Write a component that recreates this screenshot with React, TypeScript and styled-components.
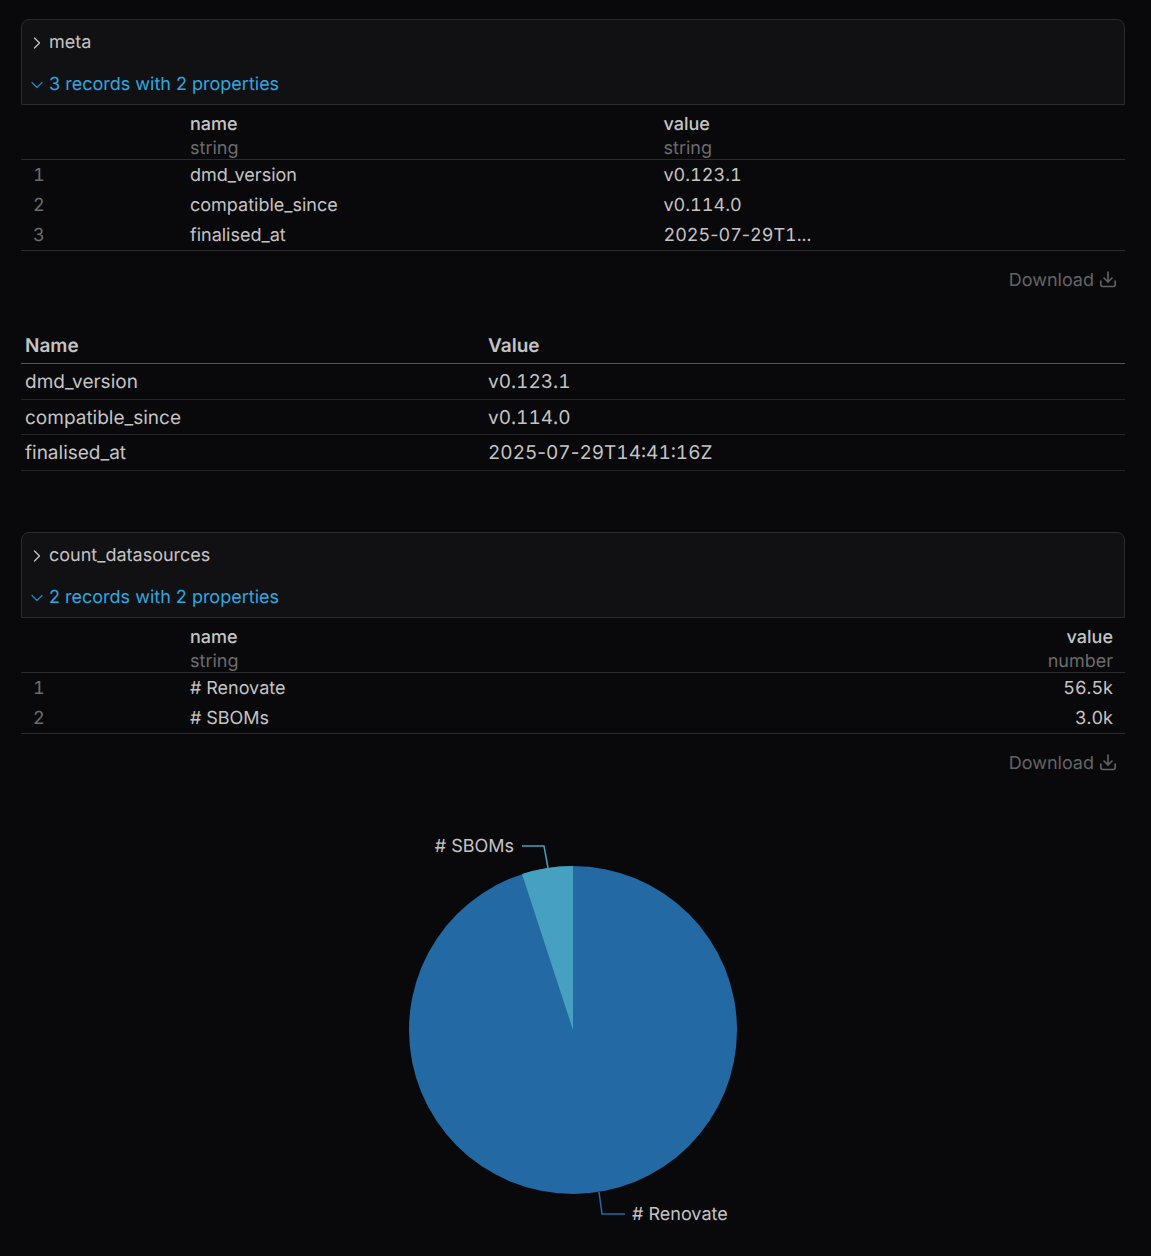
import { createGlobalStyle, styled } from 'styled-components';
import { ChevronDown, ChevronRight } from 'lucide-react';

const GlobalStyle = createGlobalStyle`
  html, body {
    margin: 0;
    padding: 0;
    background: #09090b;
  }
  body {
    font-family: Inter, "Liberation Sans", sans-serif;
    color: #c4c4c5;
    font-size: 18px;
    text-rendering: geometricPrecision;
  }
`;

const Page = styled.div`
  width: 1151px;
  height: 1256px;
  box-sizing: border-box;
  padding: 19px 26px 0 21px;
  overflow: hidden;
`;

const Panel = styled.div`
  height: 86px;
  box-sizing: border-box;
  background: #111113;
  border: 1px solid #2a2b2e;
  border-radius: 8px 8px 0 0;
  display: flex;
  flex-direction: column;
  padding: 1px 0 0 5px;
`;

const PanelRow = styled.div<{ $active?: boolean }>`
  height: 42px;
  flex: none;
  display: flex;
  align-items: center;
  gap: 2px;
  font-size: 18px;
  color: ${(p) => (p.$active ? '#2fa8e0' : '#c4c4c5')};
  svg {
    width: 20px;
    height: 20px;
    flex: none;
    margin-top: 2px;
    stroke-width: 1.5;
    color: ${(p) => (p.$active ? '#1f86bd' : '#c4c4c5')};
  }
`;

const DataRow = styled.div<{ $right?: boolean }>`
  display: grid;
  grid-template-columns: ${(p) => (p.$right ? '157px 1fr 120px' : '157px 473.5px 1fr')};
  height: 30px;
  line-height: 32px;
  padding-left: 12px;
  font-variant-numeric: tabular-nums;
`;

const HeadBlock = styled.div`
  height: 55px;
  box-sizing: border-box;
  padding-top: 8px;
  border-bottom: 1px solid #2a2b2e;
`;

const HeadRow = styled(DataRow)`
  height: 24px;
  line-height: 24px;
`;

const RowsBlock = styled.div`
  border-bottom: 1px solid #2a2b2e;
`;

const Muted = styled.div`
  color: #6b6c6e;
`;

const Strong = styled.div`
  font-weight: 500;
`;

const Cell = styled.div<{ $right?: boolean }>`
  text-align: ${(p) => (p.$right ? 'right' : 'left')};
  padding-right: ${(p) => (p.$right ? '12px' : '0')};
`;

const Dash = styled.span`
  font-variant-numeric: normal;
`;

const DownloadBar = styled.div`
  height: 57px;
  box-sizing: border-box;
  padding: 2px 5px 0 0;
  display: flex;
  justify-content: flex-end;
  align-items: center;
  gap: 2px;
  color: #636466;
  svg {
    width: 24px;
    height: 24px;
    margin-bottom: 2px;
    stroke-width: 1.6;
  }
`;

const MdTable = styled.div`
  margin-top: 21px;
  font-size: 19px;
`;

const MdRow = styled.div<{ $head?: boolean }>`
  display: grid;
  grid-template-columns: 463px 1fr;
  height: ${(p) => (p.$head ? '35px' : '35.5px')};
  box-sizing: border-box;
  line-height: ${(p) => (p.$head ? '34px' : '35.5px')};
  padding-left: 4px;
  font-weight: ${(p) => (p.$head ? 600 : 400)};
  font-variant-numeric: tabular-nums;
  border-bottom: 1px solid ${(p) => (p.$head ? '#55565a' : '#25262a')};
`;

const Section = styled.div`
  margin-top: 61.5px;
`;

const Chart = styled.svg`
  display: block;
  width: 1104px;
  height: 438px;
  margin-top: 1px;
  font-family: Inter, "Liberation Sans", sans-serif;
`;

function DownloadIcon() {
  return (
    <svg viewBox='0 0 24 24' fill='none' stroke='currentColor' strokeLinecap='round' strokeLinejoin='round'>
      <path d='M4.8 13v3.5a2 2 0 0 0 2 2h10.4a2 2 0 0 0 2 -2V13' />
      <path d='M8 10l4 4l4 -4' />
      <path d='M12 4v10' />
    </svg>
  );
}

function Header({ title, summary }: { title: string; summary: string }) {
  return (
    <Panel>
      <PanelRow>
        <ChevronRight />
        {title}
      </PanelRow>
      <PanelRow $active>
        <ChevronDown />
        {summary}
      </PanelRow>
    </Panel>
  );
}

// hyphens keep their normal width, only the digits are tabular
function Stamp({ text }: { text: string }) {
  const parts = text.split('-');
  return (
    <div>
      {parts.map((part, i) => (
        <span key={i}>
          {i > 0 && <Dash>-</Dash>}
          {part}
        </span>
      ))}
    </div>
  );
}

const metaRows = [
  ['dmd_version', 'v0.123.1'],
  ['compatible_since', 'v0.114.0'],
  ['finalised_at', '2025-07-29T1...'],
];

const mdRows = [
  ['dmd_version', 'v0.123.1'],
  ['compatible_since', 'v0.114.0'],
  ['finalised_at', '2025-07-29T14:41:16Z'],
];

const countRows = [
  ['# Renovate', '56.5k'],
  ['# SBOMs', '3.0k'],
];

export default function App() {
  return (
    <Page>
      <GlobalStyle />
      <Header title='meta' summary='3 records with 2 properties' />
      <HeadBlock>
        <HeadRow>
          <div />
          <Strong>name</Strong>
          <Strong>value</Strong>
        </HeadRow>
        <HeadRow>
          <div />
          <Muted>string</Muted>
          <Muted>string</Muted>
        </HeadRow>
      </HeadBlock>
      <RowsBlock>
        {metaRows.map((row, i) => (
          <DataRow key={row[0]}>
            <Muted>{i + 1}</Muted>
            <div>{row[0]}</div>
            <Stamp text={row[1]} />
          </DataRow>
        ))}
      </RowsBlock>
      <DownloadBar>
        Download
        <DownloadIcon />
      </DownloadBar>

      <MdTable>
        <MdRow $head>
          <div>Name</div>
          <div>Value</div>
        </MdRow>
        {mdRows.map((row) => (
          <MdRow key={row[0]}>
            <div>{row[0]}</div>
            <Stamp text={row[1]} />
          </MdRow>
        ))}
      </MdTable>

      <Section>
        <Header title='count_datasources' summary='2 records with 2 properties' />
        <HeadBlock>
          <HeadRow $right>
            <div />
            <Strong>name</Strong>
            <Cell $right>
              <Strong>value</Strong>
            </Cell>
          </HeadRow>
          <HeadRow $right>
            <div />
            <Muted>string</Muted>
            <Cell $right>
              <Muted>number</Muted>
            </Cell>
          </HeadRow>
        </HeadBlock>
        <RowsBlock>
          {countRows.map((row, i) => (
            <DataRow key={row[0]} $right>
              <Muted>{i + 1}</Muted>
              <div>{row[0]}</div>
              <Cell $right>{row[1]}</Cell>
            </DataRow>
          ))}
        </RowsBlock>
        <DownloadBar>
          Download
          <DownloadIcon />
        </DownloadBar>
      </Section>

      {/* chart origin: x 21, y 792 */}
      <Chart viewBox='21 792 1104 438'>
        <circle cx='573' cy='1030' r='164' fill='#236aa4' />
        <path d='M573 1030 L573 866 A164 164 0 0 0 522 874 Z' fill='#45a1bf' />
        <polyline points='522,846 544,846 548,868' fill='none' stroke='#45a1bf' strokeWidth='1.5' />
        <polyline points='599,1192 602,1214 625,1214' fill='none' stroke='#236aa4' strokeWidth='1.5' />
        <text x='514' y='852' textAnchor='end' fontSize='18' fill='#c4c4c5'>
          # SBOMs
        </text>
        <text x='632' y='1220' fontSize='18' fill='#c4c4c5'>
          # Renovate
        </text>
      </Chart>
    </Page>
  );
}
